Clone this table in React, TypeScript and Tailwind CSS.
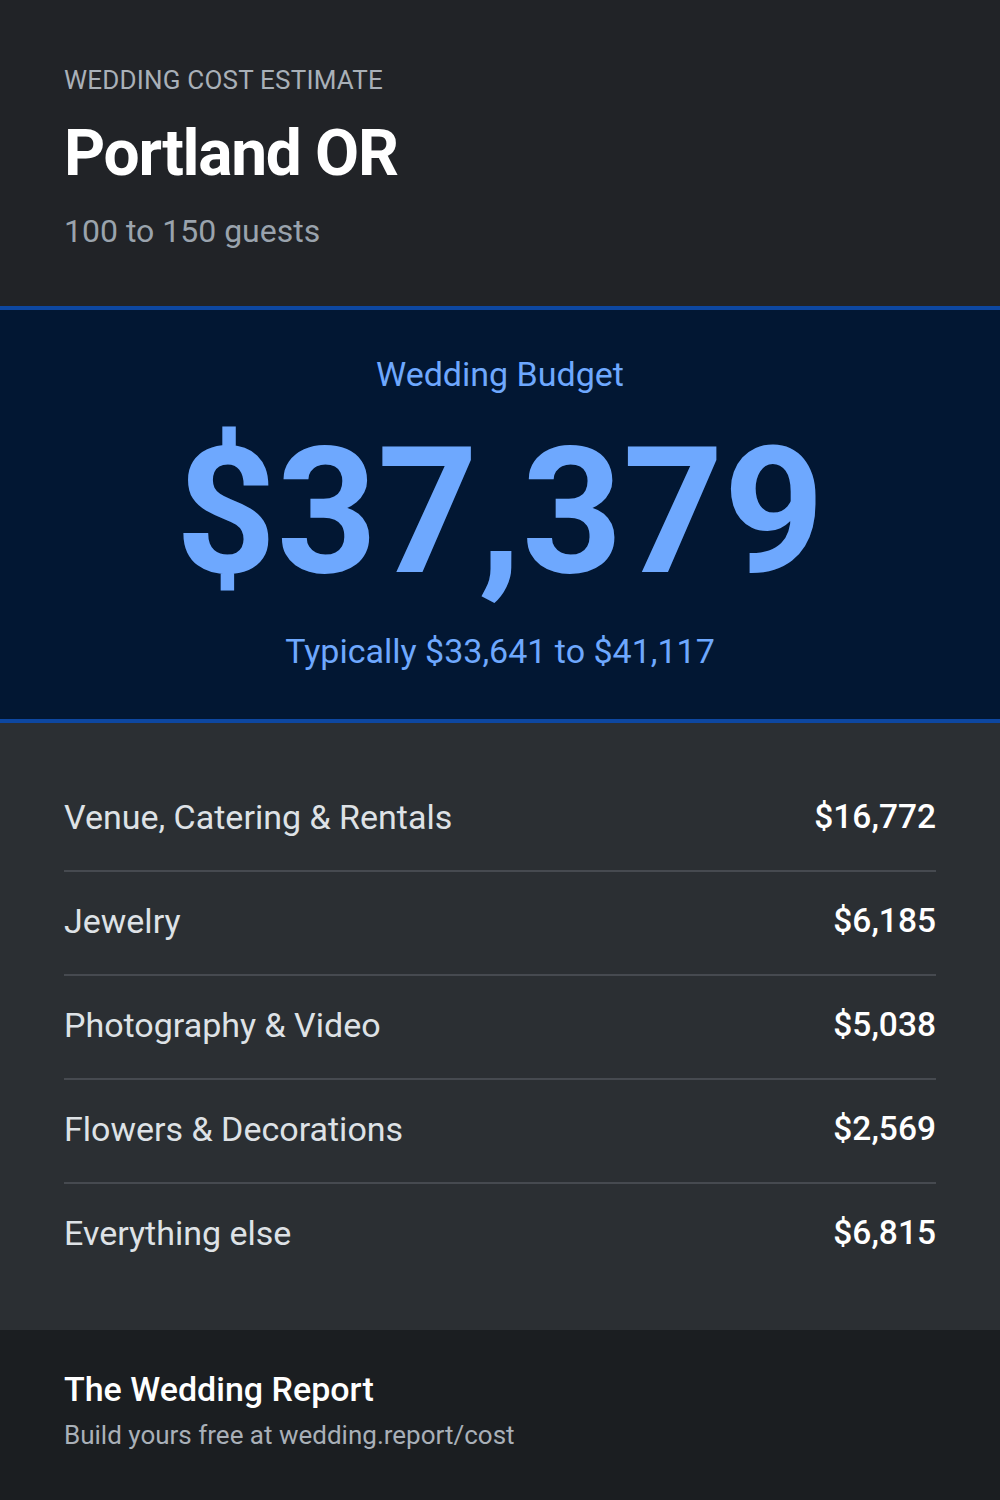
const rows = [
  { label: "Venue, Catering & Rentals", amount: "$16,772" },
  { label: "Jewelry", amount: "$6,185" },
  { label: "Photography & Video", amount: "$5,038" },
  { label: "Flowers & Decorations", amount: "$2,569" },
  { label: "Everything else", amount: "$6,815" },
];

export default function App() {
  return (
    <div className="w-[1000px] min-h-[1500px] bg-[#1b1e21] font-['Roboto',sans-serif] leading-none">
      {/* header */}
      <header className="bg-[#212327] px-16 pt-[67px] pb-[59px]">
        <p className="text-[26px] tracking-[0.2px] text-[#a9b0b8] uppercase">Wedding cost estimate</p>
        <h1 className="mt-[29px] text-[64px] font-bold tracking-[-0.02em] text-white">Portland OR</h1>
        <p className="mt-[29px] text-[32px] text-[#9aa3ad]">100 to 150 guests</p>
      </header>

      {/* total */}
      <section className="bg-[#021733] border-y-4 border-[#0d47a1] pt-[47px] pb-[51px] text-center text-[#6ea8fe]">
        <p className="text-[34px]">Wedding Budget</p>
        <p className="mt-[33px] text-[176px] font-bold">$37,379</p>
        <p className="mt-[34px] text-[34px]">Typically $33,641 to $41,117</p>
      </section>

      {/* breakdown */}
      <section className="bg-[#2b2f33] px-16 pt-[45px] pb-[44px]">
        {rows.map((row, i) => (
          <div
            key={row.label}
            className={`flex justify-between items-start pt-8 pb-[36px] text-[34px] ${
              i < rows.length - 1 ? "border-b-2 border-[#464a50]" : ""
            }`}
          >
            <span className="text-[#dee2e6]">{row.label}</span>
            <span className="text-white font-medium text-[33.5px]">{row.amount}</span>
          </div>
        ))}
      </section>

      {/* footer */}
      <footer className="bg-[#1b1e21] px-16 pt-[42px] pb-[52px]">
        <p className="text-[34px] font-medium text-white">The Wedding Report</p>
        <p className="mt-4 text-[26px] text-[#a9b0b8]">Build yours free at wedding.report/cost</p>
      </footer>
    </div>
  );
}
